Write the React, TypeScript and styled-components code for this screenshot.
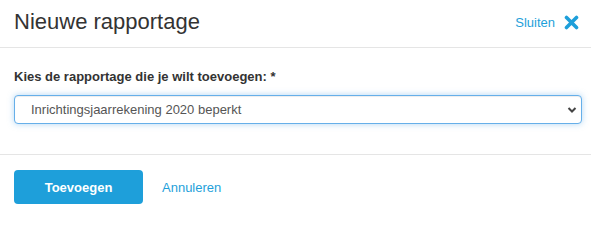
import React from 'react';
import styled, { createGlobalStyle } from 'styled-components';

const GlobalStyle = createGlobalStyle`
  html, body {
    margin: 0;
    padding: 0;
    background: #fff;
    font-family: 'Liberation Sans', Arial, sans-serif;
    color: #333;
  }
`;

const Modal = styled.div`
  width: 591px;
  background: #fff;
`;

const Header = styled.div`
  height: 47px;
  padding: 0 12px 0 14px;
  display: flex;
  align-items: center;
  justify-content: space-between;
  border-bottom: 1px solid #e5e5e5;
`;

const Title = styled.h4`
  margin: 0;
  font-size: 22px;
  font-weight: 400;
  color: #333;
  line-height: 1;
  padding-bottom: 4px;
`;

const CloseLink = styled.a`
  display: flex;
  align-items: center;
  gap: 9px;
  color: #1e9fda;
  font-size: 13px;
  cursor: pointer;
  padding-bottom: 3px;
`;

const Body = styled.div`
  padding: 20px 9px 30px 14px;
  border-bottom: 1px solid #e5e5e5;
`;

const Label = styled.label`
  display: block;
  font-size: 13px;
  font-weight: 700;
  line-height: 18px;
  color: #333;
  margin-bottom: 9px;
`;

const SelectWrap = styled.div`
  position: relative;
`;

const Select = styled.select`
  appearance: none;
  -webkit-appearance: none;
  width: 100%;
  height: 29px;
  padding: 0 30px 0 16px;
  font-family: 'Liberation Sans', Arial, sans-serif;
  font-size: 13px;
  color: #555;
  background: #fff;
  border: 1px solid #66afe9;
  border-radius: 4px;
  outline: none;
  box-shadow: inset 0 1px 1px rgba(0, 0, 0, 0.075), 0 0 6px rgba(102, 175, 233, 0.5);
`;

const Chevron = styled.svg`
  position: absolute;
  right: 5px;
  top: 11px;
  pointer-events: none;
`;

const Footer = styled.div`
  padding: 15px 14px 8px;
  display: flex;
  align-items: center;
  gap: 19px;
`;

const PrimaryButton = styled.button`
  width: 129px;
  height: 34px;
  border: none;
  border-radius: 4px;
  background: #1e9fda;
  color: #fff;
  font-family: 'Liberation Sans', Arial, sans-serif;
  font-size: 13px;
  font-weight: 700;
  cursor: pointer;
`;

const TextLink = styled.a`
  color: #1e9fda;
  font-size: 13px;
  cursor: pointer;
`;

const CloseIcon = () => (
  <svg width="15" height="15" viewBox="0 0 15 15">
    <path d="M2.5 2.5 L12.5 12.5 M12.5 2.5 L2.5 12.5" stroke="#1e9fda" strokeWidth="3.6" strokeLinecap="round" />
  </svg>
);

export default function App() {
  return (
    <>
      <GlobalStyle />
      <Modal>
        <Header>
          <Title>Nieuwe rapportage</Title>
          <CloseLink>
            Sluiten
            <CloseIcon />
          </CloseLink>
        </Header>
        <Body>
          <Label htmlFor="rapportage">Kies de rapportage die je wilt toevoegen: *</Label>
          <SelectWrap>
            <Select id="rapportage" defaultValue="ij2020b">
              <option value="ij2020b">Inrichtingsjaarrekening 2020 beperkt</option>
            </Select>
            <Chevron width="10" height="8" viewBox="0 0 10 8">
              <path d="M1.5 2 L5 5.5 L8.5 2" stroke="#444" strokeWidth="2" fill="none" />
            </Chevron>
          </SelectWrap>
        </Body>
        <Footer>
          <PrimaryButton>Toevoegen</PrimaryButton>
          <TextLink>Annuleren</TextLink>
        </Footer>
      </Modal>
    </>
  );
}
